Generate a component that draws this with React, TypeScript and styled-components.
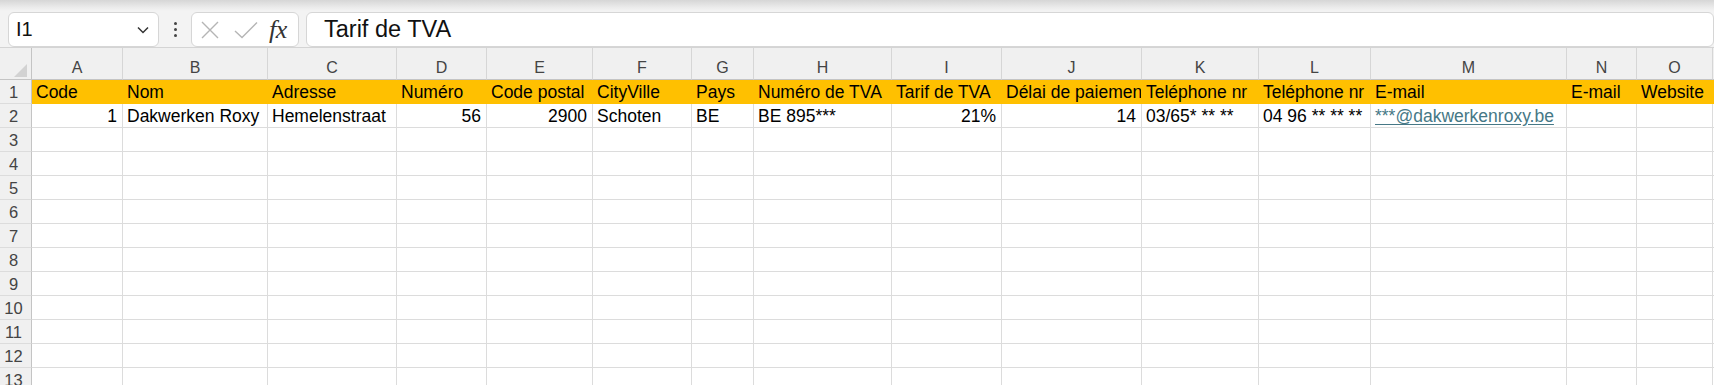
import * as React from "react";
import styled, { createGlobalStyle } from "styled-components";

const GlobalStyle = createGlobalStyle`
  html, body {
    margin: 0;
    padding: 0;
    background: #f0f0f0;
    overflow: hidden;
  }
`;

const Page = styled.div`
  width: 1714px;
  height: 385px;
  overflow: hidden;
  font-family: "Liberation Sans", Arial, sans-serif;
  background: #f0f0f0;
`;

const TopShade = styled.div`
  height: 11px;
  background: linear-gradient(#d6d6d6, #ececec 70%, #f3f3f3);
`;

const FormulaBar = styled.div`
  height: 36px;
  display: flex;
  align-items: flex-start;
  padding: 1px 0 0 8px;
  box-sizing: border-box;
  background: #f3f3f3;
`;

const Field = styled.div<{ $width?: number }>`
  height: 35px;
  box-sizing: border-box;
  background: #fff;
  border: 1px solid #d6d6d6;
  border-radius: 6px;
  display: flex;
  align-items: center;
  width: ${(p) => (p.$width ? `${p.$width}px` : "auto")};
  flex: ${(p) => (p.$width ? "none" : "1")};
`;

const NameText = styled.span`
  flex: 1;
  padding-left: 7px;
  font-size: 20px;
  color: #111;
`;

const Chevron = styled.svg`
  width: 14px;
  height: 10px;
  margin-right: 8px;
`;

const Dots = styled.div`
  width: 32px;
  display: flex;
  flex-direction: column;
  align-items: center;
  justify-content: center;
  gap: 3px;
  height: 35px;

  span {
    width: 3px;
    height: 3px;
    border-radius: 50%;
    background: #444;
  }
`;

const IconSlot = styled.svg<{ $w: number; $ml: number }>`
  width: ${(p) => p.$w}px;
  height: 18px;
  margin-left: ${(p) => p.$ml}px;
`;

const Fx = styled.span`
  font-family: "Liberation Serif", "Times New Roman", serif;
  font-style: italic;
  font-size: 26px;
  color: #333;
  margin-left: 11px;
  letter-spacing: -0.5px;
`;

const FormulaText = styled.span`
  padding-left: 17px;
  font-size: 23.5px;
  color: #111;
`;

const Gap = styled.div`
  width: 7px;
`;

const Grid = styled.div<{ $cols: string }>`
  display: grid;
  grid-template-columns: ${(p) => p.$cols};
  grid-template-rows: 32px;
  grid-auto-rows: 24px;
  border-top: 1px solid #d4d4d4;
  background: #fff;
`;

const Corner = styled.div`
  background: #f0f0f0;
  border-right: 1px solid #c4c4c4;
  border-bottom: 1px solid #c4c4c4;
  box-sizing: border-box;
  position: relative;

  &::after {
    content: "";
    position: absolute;
    right: 4px;
    bottom: 2px;
    width: 0;
    height: 0;
    border-left: 13px solid transparent;
    border-bottom: 13px solid #d2d2d2;
  }
`;

const ColHead = styled.div`
  box-sizing: border-box;
  background: #f0f0f0;
  border-right: 1px solid #d6d6d6;
  border-bottom: 1px solid #c4c4c4;
  display: flex;
  align-items: flex-end;
  justify-content: center;
  font-size: 16px;
  line-height: 20px;
  padding-bottom: 1px;
  color: #444;
`;

const RowHead = styled.div`
  box-sizing: border-box;
  background: #f0f0f0;
  border-right: 1px solid #c4c4c4;
  border-bottom: 1px solid #dcdcdc;
  text-align: center;
  padding-right: 4px;
  font-size: 16.5px;
  line-height: 25px;
  color: #444;
`;

const Cell = styled.div<{ $head?: boolean; $right?: boolean }>`
  box-sizing: border-box;
  background: ${(p) => (p.$head ? "#ffc000" : "#fff")};
  border-right: 1px solid ${(p) => (p.$head ? "#ffc000" : "#dcdcdc")};
  border-bottom: 1px solid ${(p) => (p.$head ? "#ffc000" : "#dcdcdc")};
  font-size: 17.5px;
  line-height: 25px;
  padding: 0 5px 0 4px;
  color: #000;
  white-space: nowrap;
  overflow: hidden;
  text-align: ${(p) => (p.$right ? "right" : "left")};
`;

const Link = styled.span`
  color: #467886;
  text-decoration: underline;
  text-underline-offset: 2px;
`;

const widths = [91, 145, 129, 90, 106, 99, 62, 138, 110, 140, 117, 112, 196, 70, 76, 80];
const letters = "ABCDEFGHIJKLMNOP".split("");

const headers = [
  "Code",
  "Nom",
  "Adresse",
  "Numéro",
  "Code postal",
  "CityVille",
  "Pays",
  "Numéro de TVA",
  "Tarif de TVA",
  "Délai de paiement",
  "Teléphone nr",
  "Teléphone nr",
  "E-mail",
  "E-mail",
  "Website",
  "",
];

type Value = { text: React.ReactNode; right?: boolean };

const firstRow: Value[] = [
  { text: "1", right: true },
  { text: "Dakwerken Roxy" },
  { text: "Hemelenstraat" },
  { text: "56", right: true },
  { text: "2900", right: true },
  { text: "Schoten" },
  { text: "BE" },
  { text: "BE 895***" },
  { text: "21%", right: true },
  { text: "14", right: true },
  { text: "03/65* ** **" },
  { text: "04 96 ** ** **" },
  { text: <Link>***@dakwerkenroxy.be</Link> },
  { text: "" },
  { text: "" },
  { text: "" },
];

export default function App() {
  const cols = `32px ${widths.map((w) => `${w}px`).join(" ")}`;
  const emptyRows = [3, 4, 5, 6, 7, 8, 9, 10, 11, 12, 13];

  return (
    <Page>
      <GlobalStyle />
      <TopShade />
      <FormulaBar>
        <Field $width={151}>
          <NameText>I1</NameText>
          <Chevron viewBox="0 0 14 10">
            <path d="M2 2.5 L7 7.5 L12 2.5" fill="none" stroke="#333" strokeWidth="1.5" />
          </Chevron>
        </Field>
        <Dots>
          <span />
          <span />
          <span />
        </Dots>
        <Field $width={108}>
          <IconSlot viewBox="0 0 20 18" $w={20} $ml={8}>
            <path d="M2 1 L18 17 M18 1 L2 17" stroke="#b5b5b5" strokeWidth="1.4" fill="none" />
          </IconSlot>
          <IconSlot viewBox="0 0 24 18" $w={24} $ml={14}>
            <path d="M1 10 L8 16.5 L23 1.5" stroke="#b5b5b5" strokeWidth="1.4" fill="none" />
          </IconSlot>
          <Fx>fx</Fx>
        </Field>
        <Gap />
        <Field>
          <FormulaText>Tarif de TVA</FormulaText>
        </Field>
      </FormulaBar>
      <Grid $cols={cols}>
        <Corner />
        {letters.map((l) => (
          <ColHead key={l}>{l}</ColHead>
        ))}

        <RowHead>1</RowHead>
        {headers.map((h, i) => (
          <Cell key={`h${i}`} $head>
            {h}
          </Cell>
        ))}

        <RowHead>2</RowHead>
        {firstRow.map((v, i) => (
          <Cell key={`r${i}`} $right={v.right}>
            {v.text}
          </Cell>
        ))}

        {emptyRows.map((r) => (
          <React.Fragment key={r}>
            <RowHead>{r}</RowHead>
            {letters.map((l) => (
              <Cell key={l} />
            ))}
          </React.Fragment>
        ))}
      </Grid>
    </Page>
  );
}
